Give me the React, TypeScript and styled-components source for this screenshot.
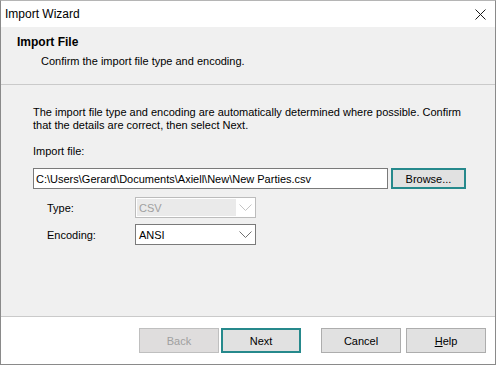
import styled, { createGlobalStyle } from 'styled-components';

const GlobalStyle = createGlobalStyle`
  html, body {
    margin: 0;
    padding: 0;
    background: #ffffff;
  }
  body {
    font-family: "Liberation Sans", Arial, sans-serif;
    font-size: 11px;
    color: #000000;
  }
`;

const Window = styled.div`
  width: 496px;
  height: 365px;
  box-sizing: border-box;
  border: 1px solid #8a8a8a;
  border-top-color: #b5b5b5;
  display: flex;
  flex-direction: column;
  background: #f0f0f0;
  overflow: hidden;
`;

const TitleBar = styled.div`
  height: 26px;
  flex-shrink: 0;
  background: #ffffff;
  display: flex;
  align-items: center;
  justify-content: space-between;
  padding-left: 4px;
`;

const TitleText = styled.span`
  font-size: 12px;
`;

const CloseButton = styled.div`
  width: 46px;
  height: 26px;
  display: flex;
  align-items: center;
  justify-content: center;
  margin-right: -8px;
`;

const Header = styled.div`
  height: 58px;
  flex-shrink: 0;
  box-sizing: border-box;
  padding: 7px 0 0 16px;
  border-bottom: 1px solid #cacaca;
`;

const HeaderTitle = styled.div`
  font-weight: bold;
  font-size: 12px;
  line-height: 16px;
`;

const HeaderSub = styled.div`
  line-height: 16px;
  margin-top: 3px;
  padding-left: 24px;
`;

const Body = styled.div`
  flex: 1;
  box-sizing: border-box;
  padding: 21px 0 0 32px;
  border-bottom: 1px solid #cacaca;
`;

const Paragraph = styled.p`
  margin: 0;
  line-height: 13px;
  width: 445px;
`;

const FieldLabel = styled.div`
  margin-top: 13px;
  line-height: 13px;
`;

const FileRow = styled.div`
  display: flex;
  gap: 3px;
  margin-top: 10px;
`;

const TextBox = styled.div`
  width: 355px;
  height: 21px;
  box-sizing: border-box;
  border: 1px solid #7a7a7a;
  background: #ffffff;
  display: flex;
  align-items: center;
  padding-left: 2px;
  white-space: nowrap;
`;

const Button = styled.div<{ $default?: boolean; $disabled?: boolean; $w?: number; $h?: number }>`
  width: ${(p) => p.$w ?? 80}px;
  height: ${(p) => p.$h ?? 25}px;
  box-sizing: border-box;
  display: flex;
  align-items: center;
  justify-content: center;
  background: ${(p) => (p.$disabled ? '#dfdddd' : '#e1e1e1')};
  color: ${(p) => (p.$disabled ? '#a0a0a0' : '#000000')};
  border: ${(p) =>
    p.$default ? '2px solid #26898c' : p.$disabled ? '1px solid #bfbfbf' : '1px solid #adadad'};
`;

const OptionRow = styled.div<{ $gap: number }>`
  display: flex;
  align-items: center;
  margin-top: ${(p) => p.$gap}px;
  padding-left: 14px;
`;

const OptionLabel = styled.span`
  width: 88px;
`;

const Combo = styled.div<{ $disabled?: boolean }>`
  width: 121px;
  height: 21px;
  box-sizing: border-box;
  border: 1px solid ${(p) => (p.$disabled ? '#bcbcbc' : '#7a7a7a')};
  background: #ffffff;
  display: flex;
  align-items: stretch;
  padding: 1px;
`;

const ComboValue = styled.div<{ $disabled?: boolean }>`
  flex: 1;
  display: flex;
  align-items: center;
  padding-left: 2px;
  background: ${(p) => (p.$disabled ? '#eaeaea' : '#ffffff')};
  color: ${(p) => (p.$disabled ? '#a0a0a0' : '#000000')};
`;

const ComboArrow = styled.div`
  width: 18px;
  display: flex;
  align-items: center;
  justify-content: center;
`;

const Footer = styled.div`
  height: 47px;
  flex-shrink: 0;
  background: #ffffff;
  display: flex;
  align-items: center;
  justify-content: flex-end;
  padding-right: 9px;
`;

const NavGroup = styled.div`
  display: flex;
  gap: 2px;
  margin-right: 20px;
`;

const ActionGroup = styled.div`
  display: flex;
  gap: 5px;
`;

const Mnemonic = styled.span`
  text-decoration: underline;
`;

const Chevron = ({ color }: { color: string }) => (
  <svg width="13" height="7" viewBox="0 0 13 7">
    <path d="M0.5 0.5 L6.5 6.5 L12.5 0.5" fill="none" stroke={color} strokeWidth="1" />
  </svg>
);

export default function App() {
  return (
    <>
      <GlobalStyle />
      <Window>
        <TitleBar>
          <TitleText>Import Wizard</TitleText>
          <CloseButton>
            <svg width="11" height="11" viewBox="0 0 11 11">
              <path d="M0.5 0.5 L10.5 10.5 M10.5 0.5 L0.5 10.5" stroke="#1a1a1a" strokeWidth="1" />
            </svg>
          </CloseButton>
        </TitleBar>

        <Header>
          <HeaderTitle>Import File</HeaderTitle>
          <HeaderSub>Confirm the import file type and encoding.</HeaderSub>
        </Header>

        <Body>
          <Paragraph>
            The import file type and encoding are automatically determined where possible. Confirm
            that the details are correct, then select Next.
          </Paragraph>
          <FieldLabel>Import file:</FieldLabel>
          <FileRow>
            <TextBox>C:\Users\Gerard\Documents\Axiell\New\New Parties.csv</TextBox>
            <Button $default $w={75} $h={21}>Browse...</Button>
          </FileRow>
          <OptionRow $gap={8}>
            <OptionLabel>Type:</OptionLabel>
            <Combo $disabled>
              <ComboValue $disabled>CSV</ComboValue>
              <ComboArrow>
                <Chevron color="#c4c4c4" />
              </ComboArrow>
            </Combo>
          </OptionRow>
          <OptionRow $gap={6}>
            <OptionLabel>Encoding:</OptionLabel>
            <Combo>
              <ComboValue>ANSI</ComboValue>
              <ComboArrow>
                <Chevron color="#707070" />
              </ComboArrow>
            </Combo>
          </OptionRow>
        </Body>

        <Footer>
          <NavGroup>
            <Button $disabled>Back</Button>
            <Button $default>Next</Button>
          </NavGroup>
          <ActionGroup>
            <Button>Cancel</Button>
            <Button>
              <span>
                <Mnemonic>H</Mnemonic>elp
              </span>
            </Button>
          </ActionGroup>
        </Footer>
      </Window>
    </>
  );
}
